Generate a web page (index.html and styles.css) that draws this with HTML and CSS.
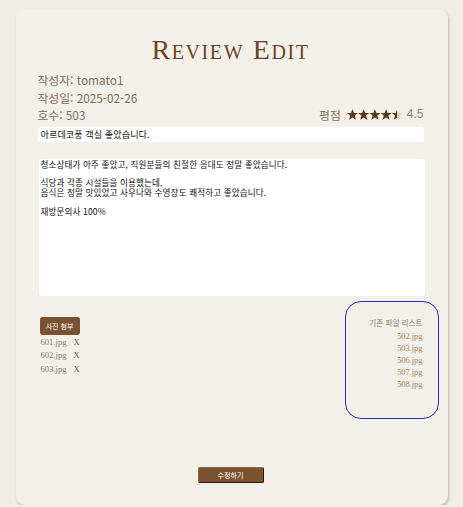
FILE: index.html
```html
<!DOCTYPE html>
<html lang="ko">
<head>
<meta charset="utf-8">
<title>Review Edit</title>
<link rel="stylesheet" href="styles.css">
</head>
<body>
<div class="card">
  <h1 class="title">Review Edit</h1>
  <div class="info">
    <div class="info-line">작성자: tomato1</div>
    <div class="info-line">작성일: 2025-02-26</div>
    <div class="info-line info-row">
      <span>호수: 503</span>
      <span class="rating">
        <span class="rating-label">평점</span>
        <svg class="stars" width="57" height="11" viewBox="0 0 57 11">
          <defs>
            <linearGradient id="halfFill" x1="0" y1="0" x2="1" y2="0">
              <stop offset="0.5" stop-color="#5b3816"/>
              <stop offset="0.5" stop-color="#d8d2ca"/>
            </linearGradient>
          </defs>
          <polygon fill="#5b3816" points="5.5,0.2 7,4 11,4.1 7.8,6.6 9,10.8 5.5,8.4 2,10.8 3.2,6.6 0,4.1 4,4"/>
          <polygon fill="#5b3816" transform="translate(11.2 0)" points="5.5,0.2 7,4 11,4.1 7.8,6.6 9,10.8 5.5,8.4 2,10.8 3.2,6.6 0,4.1 4,4"/>
          <polygon fill="#5b3816" transform="translate(22.4 0)" points="5.5,0.2 7,4 11,4.1 7.8,6.6 9,10.8 5.5,8.4 2,10.8 3.2,6.6 0,4.1 4,4"/>
          <polygon fill="#5b3816" transform="translate(33.6 0)" points="5.5,0.2 7,4 11,4.1 7.8,6.6 9,10.8 5.5,8.4 2,10.8 3.2,6.6 0,4.1 4,4"/>
          <polygon fill="url(#halfFill)" transform="translate(44.8 0)" points="5.5,0.2 7,4 11,4.1 7.8,6.6 9,10.8 5.5,8.4 2,10.8 3.2,6.6 0,4.1 4,4"/>
        </svg>
        <span class="rating-value">4.5</span>
      </span>
    </div>
  </div>
  <input class="title-input" type="text" spellcheck="false" autocomplete="off" value="아르데코풍 객실 좋았습니다.">
  <textarea class="content-input" spellcheck="false" autocomplete="off">청소상태가 아주 좋았고, 직원분들의 친절한 응대도 정말 좋았습니다.

식당과 각종 시설들을 이용했는데,
음식은 정말 맛있었고 사우나와 수영장도 쾌적하고 좋았습니다.

재방문의사 100%</textarea>
  <div class="files-row">
    <div class="upload">
      <button class="btn-attach" type="button">사진 첨부</button>
      <ul class="new-files">
        <li><span>601.jpg</span><span class="remove">X</span></li>
        <li><span>602.jpg</span><span class="remove">X</span></li>
        <li><span>603.jpg</span><span class="remove">X</span></li>
      </ul>
    </div>
    <div class="old-files">
      <div class="old-title">기존 파일 리스트</div>
      <ul class="old-list">
        <li>502.jpg</li>
        <li>503.jpg</li>
        <li>506.jpg</li>
        <li>507.jpg</li>
        <li>508.jpg</li>
      </ul>
    </div>
  </div>
  <div class="submit-wrap">
    <button class="btn-submit" type="button">수정하기</button>
  </div>
</div>
</body>
</html>
```

FILE: styles.css
```css
html, body {
  margin: 0;
  padding: 0;
}
body {
  background: #f1ede7;
  font-family: "Noto Sans CJK KR", "Noto Sans", sans-serif;
}
.card {
  width: 432px;
  box-sizing: border-box;
  margin: 9px auto 0;
  padding: 25px 24px 22px 22px;
  background: #f3efe9;
  border-radius: 9px;
  box-shadow: 1px 2px 3px rgba(0, 0, 0, 0.22);
}
.title {
  margin: 0;
  font-family: "Liberation Serif", serif;
  font-weight: normal;
  font-variant: small-caps;
  font-size: 28px;
  line-height: 32px;
  letter-spacing: 1.6px;
  text-align: center;
  color: #6b4423;
}
.info {
  margin-top: 5px;
  color: #7e6e5c;
  font-size: 11.8px;
}
.info-line {
  height: 17.5px;
  line-height: 17.5px;
}
.info-row {
  display: flex;
  justify-content: space-between;
  align-items: center;
}
.rating {
  display: flex;
  align-items: center;
  gap: 6px;
  color: #8a8580;
}
.rating-label {
  color: #7e6e5c;
  font-size: 11.8px;
}
.stars {
  display: block;
}
.rating-value {
  margin-left: -3px;
  font-family: "Liberation Sans", sans-serif;
  font-size: 12px;
  color: #8a8580;
}
.title-input {
  display: block;
  box-sizing: border-box;
  width: 386px;
  height: 15px;
  margin: 3px 0 0 0;
  padding: 0 3px;
  border: none;
  border-radius: 3px;
  background: #fff;
  font-family: "Noto Sans CJK KR", sans-serif;
  font-size: 9.2px;
  color: #111;
  outline: none;
}
.content-input {
  display: block;
  box-sizing: border-box;
  width: 386px;
  height: 137px;
  margin: 17px 0 0 1px;
  padding: 1px 2px;
  border: none;
  border-radius: 3px;
  background: #fff;
  font-family: "Noto Sans CJK KR", sans-serif;
  font-size: 8.6px;
  line-height: 9.4px;
  letter-spacing: 0.1px;
  color: #111;
  resize: none;
  outline: none;
}
.content-input::spelling-error,
.content-input::grammar-error,
.title-input::spelling-error,
.title-input::grammar-error {
  text-decoration: none;
}
.files-row {
  display: flex;
  justify-content: space-between;
  align-items: flex-start;
  margin-top: 5px;
  margin-right: -15px;
}
.upload {
  padding-top: 16px;
  padding-left: 2px;
}
.btn-attach {
  display: block;
  width: 40px;
  height: 18px;
  padding: 0;
  border: none;
  border-radius: 3px;
  background: #7b5230;
  color: #fff;
  font-family: "Noto Sans CJK KR", sans-serif;
  font-size: 7px;
}
.new-files {
  list-style: none;
  margin: 1px 0 0 1px;
  padding: 0;
  font-family: "Liberation Serif", serif;
  font-size: 8.6px;
  line-height: 13.5px;
  color: #8c7b6a;
}
.new-files li {
  display: flex;
  gap: 7px;
}
.remove {
  color: #6c5a4a;
}
.old-files {
  box-sizing: border-box;
  width: 94px;
  height: 118px;
  padding: 15px 15px 0 0;
  border: 1.5px solid #2a2ac4;
  border-radius: 16px;
  text-align: right;
}
.old-title {
  font-family: "Noto Sans CJK KR", sans-serif;
  font-size: 7.6px;
  line-height: 12px;
  color: #8c7b6a;
}
.old-list {
  list-style: none;
  margin: 2px 0 0;
  padding: 0;
  font-family: "Liberation Serif", serif;
  font-size: 8.4px;
  line-height: 12px;
  color: #a4845c;
}
.submit-wrap {
  display: flex;
  justify-content: center;
  margin-top: 48px;
}
.btn-submit {
  width: 66px;
  height: 16px;
  padding: 0;
  border: 1px solid #2a1a0c;
  border-top-color: #8a6a4a;
  border-left-color: #8a6a4a;
  border-radius: 2px;
  background: #7b5230;
  color: #fff;
  font-family: "Noto Sans CJK KR", sans-serif;
  font-size: 7px;
}
```
